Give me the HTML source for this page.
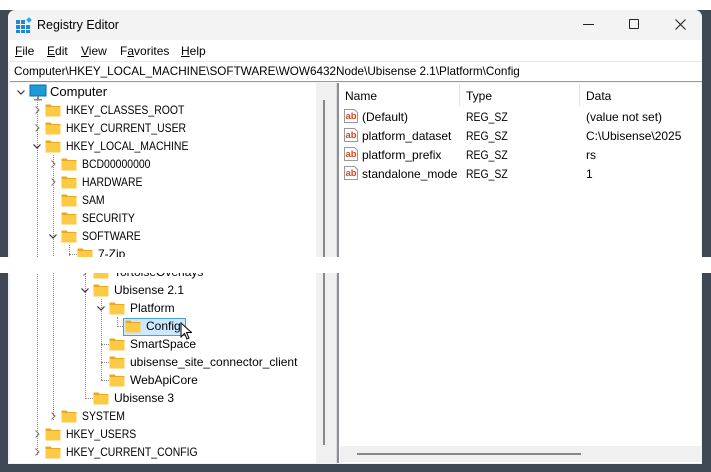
<!DOCTYPE html>
<html><head><meta charset="utf-8"><style>
*{margin:0;padding:0;box-sizing:border-box}
body{width:711px;height:472px;overflow:hidden;background:#3e4854;font-family:"Liberation Sans",sans-serif;font-size:12px;color:#000;position:relative}
.a{position:absolute;white-space:nowrap}
.t{line-height:18px;height:18px}
.u{transform:scaleX(0.87);transform-origin:0 50%}
svg{position:absolute}
.dv{position:absolute;border-left:1px dotted #888;width:0}
.dh{position:absolute;border-top:1px dotted #888;height:0}
</style></head><body>
<div class="a" style="left:0;top:0;width:711px;height:10px;background:#fff"></div>
<div class="a" style="left:8px;top:10px;width:694px;height:454px;background:#f3f3f3;border-radius:7px 7px 0 0"></div>
<svg style="left:16px;top:17px" width="16" height="16" viewBox="0 0 16 16"><g fill="#1e88d8"><rect x="0" y="3" width="4" height="4"/><rect x="5" y="3" width="4" height="4"/><rect x="0" y="8" width="4" height="4"/><rect x="5" y="8" width="4" height="4"/><rect x="10" y="8" width="4" height="4"/><rect x="0" y="13" width="4" height="3"/><rect x="5" y="13" width="4" height="3"/><rect x="10" y="13" width="4" height="3"/></g><rect x="11" y="1" width="4" height="4" fill="#2aa3e8" transform="rotate(45 13 3)"/></svg>
<div class="a" style="left:37px;top:18px;font-size:12.5px">Registry Editor</div>
<div class="a" style="left:583px;top:24px;width:11px;height:1px;background:#222"></div>
<div class="a" style="left:629px;top:19px;width:10px;height:10px;border:1px solid #222;border-radius:1px"></div>
<svg style="left:675px;top:19px" width="11" height="11"><path d="M0.5 0.5L10.5 10.5M10.5 0.5L0.5 10.5" stroke="#222" stroke-width="1.1"/></svg>
<div class="a" style="left:8px;top:40px;width:694px;height:21px;background:#fff"></div>
<div class="a" style="left:15px;top:44px"><u>F</u>ile</div>
<div class="a" style="left:47px;top:44px"><u>E</u>dit</div>
<div class="a" style="left:81px;top:44px"><u>V</u>iew</div>
<div class="a" style="left:120px;top:44px">F<u>a</u>vorites</div>
<div class="a" style="left:181px;top:44px"><u>H</u>elp</div>
<div class="a" style="left:10px;top:61px;width:692px;height:21px;background:#fff;border-bottom:1px solid #999;border-top:1px solid #e6e6e6"></div>
<div class="a u" style="left:14px;top:64px;transform:scaleX(0.977)">Computer\HKEY_LOCAL_MACHINE\SOFTWARE\WOW6432Node\Ubisense 2.1\Platform\Config</div>
<div class="a" style="left:10px;top:83px;width:306px;height:380px;background:#fff"></div>
<div class="a" style="left:316px;top:83px;width:17px;height:380px;background:#f0f0f0"></div>
<div class="a" style="left:323px;top:100px;width:2px;height:345px;background:#888"></div>
<div class="a" style="left:333px;top:83px;width:4px;height:380px;background:#f0f0f0;border-right:1px solid #ddd"></div>
<div class="a" style="left:337px;top:83px;width:2px;height:380px;background:#8a8f96"></div>
<div class="a" style="left:339px;top:83px;width:362px;height:380px;background:#fff"></div>
<div class="a" style="left:459px;top:84px;width:1px;height:22px;background:#e5e5e5"></div>
<div class="a" style="left:579px;top:84px;width:1px;height:22px;background:#e5e5e5"></div>
<div class="a" style="left:345px;top:89px">Name</div>
<div class="a" style="left:466px;top:89px">Type</div>
<div class="a" style="left:586px;top:89px">Data</div>
<div class="a" style="left:340px;top:446px;width:361px;height:16px;background:#f0f0f0"></div>
<div class="a" style="left:357px;top:453px;width:224px;height:2px;background:#888"></div>

<svg width="0" height="0" style="position:absolute"><defs>
<symbol id="f" viewBox="0 0 16 16"><path d="M0.5 2.5h5l1.5 1.5h8.5v10.5h-15z" fill="#e8a91e"/><rect x="0.5" y="5" width="15" height="9.5" fill="#fcca45"/></symbol>
<symbol id="ab" viewBox="0 0 16 16"><path d="M1.5 1.5h10l3 3v10h-13z" fill="#fff" stroke="#999"/><text x="8" y="11" text-anchor="middle" font-size="9.5" font-family="Liberation Sans" font-weight="bold" fill="#d9451c">ab</text></symbol>
<symbol id="cr" viewBox="0 0 8 8"><path d="M2.5 0.5l3.5 3.5-3.5 3.5" fill="none" stroke="#777"/></symbol>
<symbol id="cd" viewBox="0 0 8 8"><path d="M0.5 2.5l3.5 3.5 3.5-3.5" fill="none" stroke="#333" stroke-width="1.2"/></symbol>
</defs></svg>

<svg style="left:343px;top:108px" width="16" height="16"><use href="#ab"/></svg>
<div class="a t" style="left:362px;top:108px">(Default)</div><div class="a t u" style="left:466px;top:108px">REG_SZ</div><div class="a t" style="left:586px;top:108px">(value not set)</div>
<svg style="left:343px;top:127px" width="16" height="16"><use href="#ab"/></svg>
<div class="a t" style="left:362px;top:127px">platform_dataset</div><div class="a t u" style="left:466px;top:127px">REG_SZ</div><div class="a t" style="left:586px;top:127px">C:\Ubisense\2025</div>
<svg style="left:343px;top:146px" width="16" height="16"><use href="#ab"/></svg>
<div class="a t" style="left:362px;top:146px">platform_prefix</div><div class="a t u" style="left:466px;top:146px">REG_SZ</div><div class="a t" style="left:586px;top:146px">rs</div>
<svg style="left:343px;top:165px" width="16" height="16"><use href="#ab"/></svg>
<div class="a t" style="left:362px;top:165px">standalone_mode</div><div class="a t u" style="left:466px;top:165px">REG_SZ</div><div class="a t" style="left:586px;top:165px">1</div>

<div class="dv" style="left:37px;top:100px;height:355px"></div>
<div class="dv" style="left:53px;top:155px;height:265px"></div>
<div class="dv" style="left:69px;top:245px;height:15px"></div>
<div class="dh" style="left:69px;top:254px;width:8px"></div>
<div class="dv" style="left:85px;top:272px;height:127px"></div>
<div class="dh" style="left:85px;top:398px;width:8px"></div>
<div class="dv" style="left:101px;top:299px;height:81px"></div>
<div class="dh" style="left:101px;top:344px;width:8px"></div>
<div class="dh" style="left:101px;top:362px;width:8px"></div>
<div class="dh" style="left:101px;top:380px;width:8px"></div>
<div class="dv" style="left:117px;top:317px;height:10px"></div>
<div class="dh" style="left:117px;top:326px;width:6px"></div>

<svg style="left:17px;top:88px" width="8" height="8"><use href="#cd"/></svg>
<svg style="left:29px;top:84px" width="18" height="17" viewBox="0 0 18 17"><rect x="1" y="1" width="16" height="11" fill="#1b9bd8" stroke="#0a6fa8"/><rect x="8" y="12" width="2" height="3" fill="#888"/><rect x="5" y="15" width="8" height="1.5" fill="#888"/></svg>
<div class="a t" style="left:50px;top:83px;font-size:13px">Computer</div>

<svg style="left:33px;top:106px" width="8" height="8"><use href="#cr"/></svg><svg style="left:45px;top:102px" width="16" height="16"><use href="#f"/></svg><div class="a t u" style="left:66px;top:101px">HKEY_CLASSES_ROOT</div>
<svg style="left:33px;top:124px" width="8" height="8"><use href="#cr"/></svg><svg style="left:45px;top:120px" width="16" height="16"><use href="#f"/></svg><div class="a t u" style="left:66px;top:119px">HKEY_CURRENT_USER</div>
<svg style="left:33px;top:142px" width="8" height="8"><use href="#cd"/></svg><svg style="left:45px;top:138px" width="16" height="16"><use href="#f"/></svg><div class="a t u" style="left:66px;top:137px">HKEY_LOCAL_MACHINE</div>
<svg style="left:49px;top:160px" width="8" height="8"><use href="#cr"/></svg><svg style="left:61px;top:156px" width="16" height="16"><use href="#f"/></svg><div class="a t u" style="left:82px;top:155px">BCD00000000</div>
<svg style="left:49px;top:178px" width="8" height="8"><use href="#cr"/></svg><svg style="left:61px;top:174px" width="16" height="16"><use href="#f"/></svg><div class="a t u" style="left:82px;top:173px">HARDWARE</div>
<svg style="left:61px;top:192px" width="16" height="16"><use href="#f"/></svg><div class="a t u" style="left:82px;top:191px">SAM</div>
<svg style="left:61px;top:210px" width="16" height="16"><use href="#f"/></svg><div class="a t u" style="left:82px;top:209px">SECURITY</div>
<svg style="left:49px;top:232px" width="8" height="8"><use href="#cd"/></svg><svg style="left:61px;top:228px" width="16" height="16"><use href="#f"/></svg><div class="a t u" style="left:82px;top:227px">SOFTWARE</div>
<svg style="left:77px;top:246px" width="16" height="16"><use href="#f"/></svg><div class="a t" style="left:98px;top:245px">7-Zip</div>
<svg style="left:81px;top:268px" width="8" height="8"><use href="#cr"/></svg><svg style="left:93px;top:264px" width="16" height="16"><use href="#f"/></svg><div class="a t" style="left:114px;top:263px">TortoiseOverlays</div>
<svg style="left:81px;top:286px" width="8" height="8"><use href="#cd"/></svg><svg style="left:93px;top:282px" width="16" height="16"><use href="#f"/></svg><div class="a t" style="left:114px;top:281px">Ubisense 2.1</div>
<svg style="left:97px;top:304px" width="8" height="8"><use href="#cd"/></svg><svg style="left:109px;top:300px" width="16" height="16"><use href="#f"/></svg><div class="a t" style="left:130px;top:299px">Platform</div>
<div class="a" style="left:123px;top:318px;width:63px;height:18px;background:#cce8ff;border:1px solid #4a9ee0"></div>
<svg style="left:125px;top:318px" width="16" height="16"><use href="#f"/></svg><div class="a t" style="left:146px;top:317px">Config</div>
<svg style="left:180px;top:322px" width="12" height="18" viewBox="0 0 12 18"><path d="M1 1v14l3.5-3.5 2.5 5.5 2-1-2.5-5.5h5z" fill="#fff" stroke="#000"/></svg>
<svg style="left:109px;top:336px" width="16" height="16"><use href="#f"/></svg><div class="a t" style="left:130px;top:335px">SmartSpace</div>
<svg style="left:109px;top:354px" width="16" height="16"><use href="#f"/></svg><div class="a t" style="left:130px;top:353px">ubisense_site_connector_client</div>
<svg style="left:109px;top:372px" width="16" height="16"><use href="#f"/></svg><div class="a t" style="left:130px;top:371px">WebApiCore</div>
<svg style="left:93px;top:390px" width="16" height="16"><use href="#f"/></svg><div class="a t" style="left:114px;top:389px">Ubisense 3</div>
<svg style="left:49px;top:412px" width="8" height="8"><use href="#cr"/></svg><svg style="left:61px;top:408px" width="16" height="16"><use href="#f"/></svg><div class="a t u" style="left:82px;top:407px">SYSTEM</div>
<svg style="left:33px;top:430px" width="8" height="8"><use href="#cr"/></svg><svg style="left:45px;top:426px" width="16" height="16"><use href="#f"/></svg><div class="a t u" style="left:66px;top:425px">HKEY_USERS</div>
<svg style="left:33px;top:448px" width="8" height="8"><use href="#cr"/></svg><svg style="left:45px;top:444px" width="16" height="16"><use href="#f"/></svg><div class="a t u" style="left:66px;top:443px">HKEY_CURRENT_CONFIG</div>

<div class="a" style="left:0;top:257px;width:711px;height:16px;background:#fff"></div>
</body></html>
